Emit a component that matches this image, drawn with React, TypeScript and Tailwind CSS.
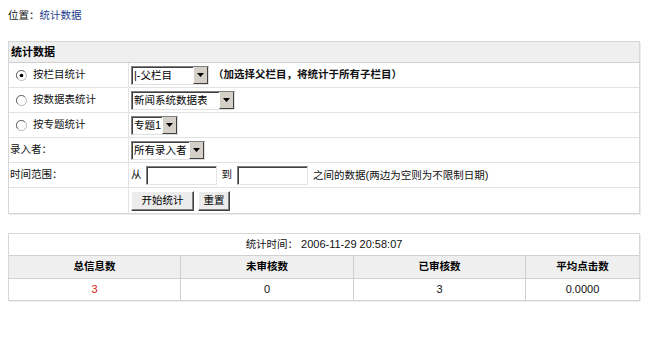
import React from "react";

const font = { fontFamily: '"Liberation Sans", "Noto Sans CJK SC", sans-serif' };

function FakeSelect({ label, width }: { label: React.ReactNode; width: number }) {
  return (
    <div
      className="flex h-[19px] items-stretch border border-t-[#808080] border-l-[#808080] border-b-[#e0e0e0] border-r-[#e0e0e0] bg-white"
      style={{ width }}
    >
      <div className="flex flex-1 items-center border-l border-t border-[#404040] pl-[1px] text-[10.5px] text-black whitespace-nowrap overflow-hidden">
        {label}
      </div>
      <div className="flex w-[15px] items-center justify-center border border-t-white border-l-white border-b-[#404040] border-r-[#404040] bg-[#d4d0c8] border-t-0">
        <svg width="7" height="4" viewBox="0 0 7 4">
          <path d="M0 0H7L3.5 4Z" fill="#000" />
        </svg>
      </div>
    </div>
  );
}

function FakeInput({ width }: { width: number }) {
  return (
    <div
      className="h-[19px] border border-t-[#808080] border-l-[#808080] border-b-[#e4e4e4] border-r-[#e4e4e4] bg-white"
      style={{ width }}
    >
      <div className="h-full w-full border-l border-t border-[#404040]" />
    </div>
  );
}

function Btn({ children, w }: { children: React.ReactNode; w: number }) {
  return (
    <div
      className="flex h-[20px] items-center justify-center border border-t-white border-l-white border-b-[#404040] border-r-[#404040] bg-[#ececec] text-[10.5px] text-black"
      style={{ width: w, boxShadow: "inset -1px -1px 0 #808080" }}
    >
      {children}
    </div>
  );
}

function Radio({ checked }: { checked?: boolean }) {
  return (
    <svg width="11" height="11" viewBox="0 0 12 12" className="mr-[6px]">
      <circle cx="6" cy="6" r="5.5" fill="#fff" stroke="#b0b0b0" />
      <path d="M2 9.5A5 5 0 0 1 9.5 2" stroke="#606060" fill="none" />
      {checked && <circle cx="6" cy="6" r="2" fill="#000" />}
    </svg>
  );
}

function Row({
  left,
  children,
  last,
}: {
  left: React.ReactNode;
  children: React.ReactNode;
  last?: boolean;
}) {
  return (
    <div className={`flex h-[25px] ${last ? "" : "border-b border-[#e2e2e2]"}`}>
      <div className="flex w-[120px] items-center border-r border-[#e2e2e2] pl-[1px]">{left}</div>
      <div className="flex flex-1 items-center pl-[2px]">{children}</div>
    </div>
  );
}

const L = ({ children }: { children: React.ReactNode }) => (
  <span className="text-[11px]">{children}</span>
);

export default function App() {
  return (
    <div className="h-[338px] w-[650px] bg-white text-[10.5px] text-[#111]" style={font}>
      <div className="pl-[8px] pt-[8px] leading-[14px]">
        位置：<span className="text-[#1d3d8c]">统计数据</span>
      </div>

      <div className="ml-[8px] mt-[19px] w-[632px] border border-[#d6d6d6] shadow-[1px_1px_0_#ececec]">
        <div className="flex h-[21px] items-center border-b border-[#d0d0d0] bg-[#efefef] pl-[2px] text-[11px] font-bold text-black">
          统计数据
        </div>
        <Row
          left={
            <div className="flex items-center pl-[6px]">
              <Radio checked />
              按栏目统计
            </div>
          }
        >
          <FakeSelect label={<><L>|-</L>父栏目</>} width={78} />
          <span className="ml-[4px] font-bold">（加选择父栏目，将统计于所有子栏目）</span>
        </Row>
        <Row
          left={
            <div className="flex items-center pl-[6px]">
              <Radio />
              按数据表统计
            </div>
          }
        >
          <FakeSelect label="新闻系统数据表" width={104} />
        </Row>
        <Row
          left={
            <div className="flex items-center pl-[6px]">
              <Radio />
              按专题统计
            </div>
          }
        >
          <FakeSelect label={<>专题<L>1</L></>} width={47} />
        </Row>
        <Row left={<span>录入者：</span>}>
          <FakeSelect label="所有录入者" width={74} />
        </Row>
        <Row left={<span>时间范围：</span>}>
          <span className="mr-[4px]">从</span>
          <FakeInput width={71} />
          <span className="mx-[5px]">到</span>
          <FakeInput width={71} />
          <span className="ml-[5px]">
            之间的数据<L>(</L>两边为空则为不限制日期<L>)</L>
          </span>
        </Row>
        <Row left={<span />} last>
          <Btn w={63}>开始统计</Btn>
          <div className="w-[4px]" />
          <Btn w={32}>重置</Btn>
        </Row>
      </div>

      <div className="ml-[8px] mt-[19px] w-[632px] border border-[#d6d6d6] shadow-[1px_1px_0_#ececec]">
        <div className="flex h-[22px] items-center justify-center border-b border-[#d0d0d0]">
          统计时间：&nbsp;<L>2006-11-29 20:58:07</L>
        </div>
        <div className="grid h-[23px] grid-cols-[172px_173px_172px_1fr] border-b border-[#d0d0d0] bg-[#efefef] font-bold text-black">
          <div className="flex items-center justify-center border-r border-[#d0d0d0]">总信息数</div>
          <div className="flex items-center justify-center border-r border-[#d0d0d0]">未审核数</div>
          <div className="flex items-center justify-center border-r border-[#d0d0d0]">已审核数</div>
          <div className="flex items-center justify-center">平均点击数</div>
        </div>
        <div className="grid h-[21px] grid-cols-[172px_173px_172px_1fr] text-[11px]">
          <div className="flex items-center justify-center border-r border-[#d0d0d0] text-[#e02020]">3</div>
          <div className="flex items-center justify-center border-r border-[#d0d0d0]">0</div>
          <div className="flex items-center justify-center border-r border-[#d0d0d0]">3</div>
          <div className="flex items-center justify-center">0.0000</div>
        </div>
      </div>
    </div>
  );
}
